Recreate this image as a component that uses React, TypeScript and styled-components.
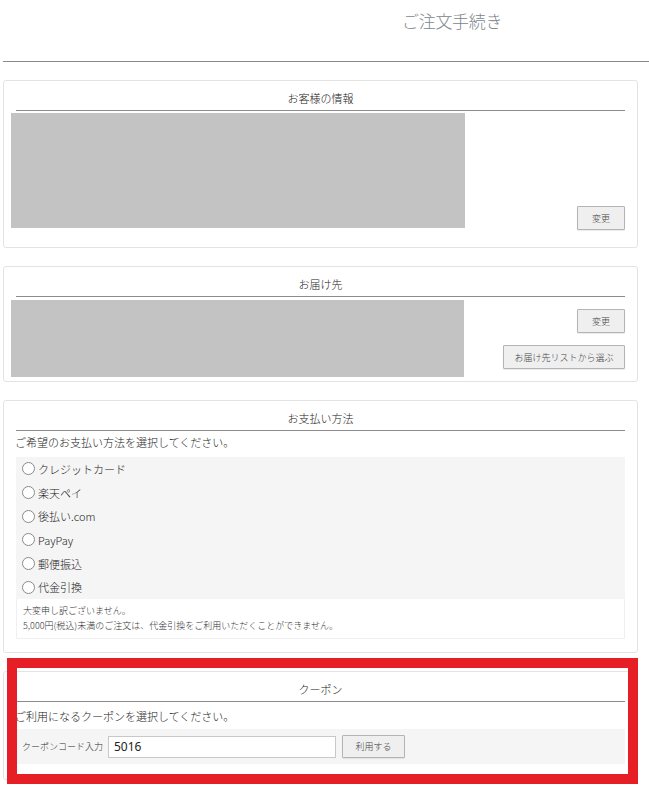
import React, { useState } from 'react'
import styled, { createGlobalStyle } from 'styled-components'

const GlobalStyle = createGlobalStyle`
  html, body {
    margin: 0;
    padding: 0;
    background: #fff;
  }
  body {
    font-family: "Noto Sans CJK JP", "Noto Sans", "Liberation Sans", sans-serif;
    font-weight: 300;
    color: #222;
  }
`

const Page = styled.div`
  width: 646px;
  padding-left: 3px;
`

const Header = styled.header`
  height: 62px;
  border-bottom: 1px solid #8a8a8a;
  box-sizing: border-box;
`

const PageTitle = styled.h1`
  margin: 0;
  padding: 9px 0 0 399px;
  font-size: 17px;
  font-weight: 300;
  line-height: 24px;
  color: #80868d;
  letter-spacing: -0.3px;
`

const Content = styled.main`
  width: 635px;
  padding-top: 18px;
`

const Card = styled.section<{ $pb: number }>`
  position: relative;
  border: 1px solid #e3e3e3;
  border-radius: 3px;
  padding: 0 12px ${(p) => p.$pb}px;
  margin-bottom: 18px;
`

const CardTitle = styled.h2`
  margin: 0;
  padding: 9px 0 4px;
  font-size: 11px;
  line-height: 16px;
  font-weight: 300;
  text-align: center;
  color: #222;
  border-bottom: 1px solid #8c8c8c;
`

const InfoRow = styled.div<{ $align: string; $mt: number }>`
  display: flex;
  justify-content: space-between;
  align-items: ${(p) => p.$align};
  margin: ${(p) => p.$mt}px 0 0 -5px;
`

const Placeholder = styled.div<{ $w: number; $h: number }>`
  width: ${(p) => p.$w}px;
  height: ${(p) => p.$h}px;
  background: #c3c3c3;
`

const ButtonColumn = styled.div<{ $pt: number }>`
  display: flex;
  flex-direction: column;
  align-items: flex-end;
  gap: 12px;
  padding-top: ${(p) => p.$pt}px;
`

const SmallButton = styled.button<{ $w: number; $h?: number; $nudge?: number }>`
  width: ${(p) => p.$w}px;
  height: ${(p) => p.$h || 24}px;
  margin-bottom: ${(p) => p.$nudge || 0}px;
  padding: 0;
  border: 1px solid #b4b4b4;
  border-radius: 1px;
  background: #efefef;
  box-shadow: 0 1px 1px rgba(0, 0, 0, 0.08);
  font-family: inherit;
  font-weight: 300;
  font-size: 9px;
  color: #444;
  cursor: pointer;
`

const Lead = styled.p<{ $mt: number }>`
  margin: ${(p) => p.$mt}px 0 0 -1px;
  font-size: 11px;
  line-height: 16px;
  color: #222;
`

const OptionBox = styled.div`
  margin-top: 7px;
  background: #f5f5f5;
`

const OptionRow = styled.label`
  display: flex;
  align-items: center;
  gap: 3px;
  height: 23.7px;
  padding-left: 6px;
  font-size: 11px;
  color: #222;
  cursor: pointer;
`

const Radio = styled.input`
  appearance: none;
  margin: 0;
  width: 13px;
  height: 13px;
  border: 1px solid #8a8a8a;
  border-radius: 50%;
  background: #fff;
  box-sizing: border-box;

  &:checked {
    background: radial-gradient(circle, #444 0 3px, #fff 3.5px);
  }
`

const Notice = styled.div`
  padding: 4px 6px 5px;
  background: #fff;
  border: 1px solid #f0f0f0;
  border-top: none;
  font-size: 9px;
  line-height: 15px;
  color: #333;
`

const CouponRow = styled.div`
  display: flex;
  align-items: center;
  gap: 6px;
  height: 35px;
  margin-top: 5px;
  padding-left: 6px;
  background: #f5f5f5;
`

const CouponLabel = styled.span`
  font-size: 9px;
  color: #333;
  width: 80px;
  white-space: nowrap;
`

const CouponInput = styled.input`
  width: 228px;
  height: 22px;
  box-sizing: border-box;
  margin: 0;
  padding: 0 5px;
  border: 1px solid #c8c8c8;
  background: #fff;
  font-family: "Noto Sans", "Liberation Sans", sans-serif;
  font-weight: 400;
  font-size: 12px;
  color: #222;
  outline: none;
`

const Highlight = styled.div`
  position: absolute;
  left: 3px;
  top: -14px;
  right: -1px;
  bottom: -5px;
  border: 10px solid #e61e26;
  pointer-events: none;
`

const payments = ['クレジットカード', '楽天ペイ', '後払い.com', 'PayPay', '郵便振込', '代金引換']

const App = () => {
  const [payment, setPayment] = useState('')
  const [coupon, setCoupon] = useState('5016')

  return (
    <>
      <GlobalStyle />
      <Page>
        <Header>
          <PageTitle>ご注文手続き</PageTitle>
        </Header>
        <Content>
          <Card $pb={19}>
            <CardTitle>お客様の情報</CardTitle>
            <InfoRow $align='flex-end' $mt={2}>
              <Placeholder $w={454} $h={115} />
              <SmallButton $w={48} $nudge={-2}>変更</SmallButton>
            </InfoRow>
          </Card>

          <Card $pb={4}>
            <CardTitle>お届け先</CardTitle>
            <InfoRow $align='flex-start' $mt={3}>
              <Placeholder $w={453} $h={77} />
              <ButtonColumn $pt={9}>
                <SmallButton $w={48}>変更</SmallButton>
                <SmallButton $w={122}>お届け先リストから選ぶ</SmallButton>
              </ButtonColumn>
            </InfoRow>
          </Card>

          <Card $pb={13}>
            <CardTitle>お支払い方法</CardTitle>
            <Lead $mt={3}>ご希望のお支払い方法を選択してください。</Lead>
            <OptionBox>
              {payments.map((p) => (
                <OptionRow key={p}>
                  <Radio
                    type='radio'
                    name='payment'
                    checked={payment === p}
                    onChange={() => setPayment(p)}
                  />
                  {p}
                </OptionRow>
              ))}
            </OptionBox>
            <Notice>
              大変申し訳ございません。
              <br />
              5,000円(税込)未満のご注文は、代金引換をご利用いただくことができません。
            </Notice>
          </Card>

          <Card $pb={15}>
            <CardTitle>クーポン</CardTitle>
            <Lead $mt={6}>ご利用になるクーポンを選択してください。</Lead>
            <CouponRow>
              <CouponLabel>クーポンコード入力</CouponLabel>
              <CouponInput value={coupon} onChange={(e) => setCoupon(e.target.value)} />
              <SmallButton $w={63} $h={23}>利用する</SmallButton>
            </CouponRow>
            <Highlight />
          </Card>
        </Content>
      </Page>
    </>
  )
}

export default App
